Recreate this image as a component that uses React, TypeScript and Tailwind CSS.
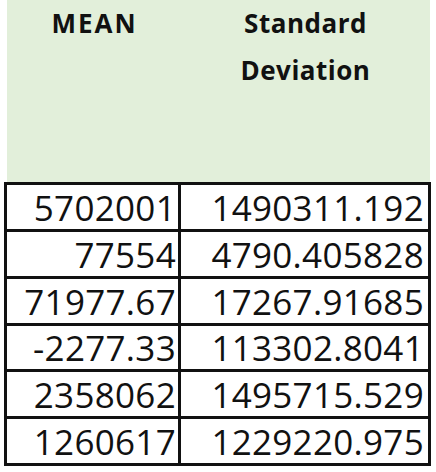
import React from "react";

const rows: [string, string][] = [
  ["5702001", "1490311.192"],
  ["77554", "4790.405828"],
  ["71977.67", "17267.91685"],
  ["-2277.33", "113302.8041"],
  ["2358062", "1495715.529"],
  ["1260617", "1229220.975"],
];

const rowH = ["h-[44px]", "h-[47px]", "h-[47px]", "h-[46px]", "h-[47px]", "h-[47px]"];

export default function App() {
  return (
    <div className="w-[436px] h-[472px] bg-white text-[#111] overflow-hidden" style={{ fontFamily: '"Open Sans", "Liberation Sans", sans-serif' }}>
      <div className="ml-[7px] w-[423px] h-[182px] bg-[#e2efda] flex font-bold text-[26px] leading-[47px]">
        <div className="w-[173px] text-center tracking-[2px] pl-[2px]">MEAN</div>
        <div className="w-[250px] text-center tracking-[0.5px] pl-[1px]">
          Standard
          <br />
          Deviation
        </div>
      </div>
      <div className="ml-[4px] w-[427px] border-[3px] border-[#111]">
        {rows.map((r, i) => (
          <div key={i} className={`flex ${rowH[i]} ${i > 0 ? "border-t-[3px] border-[#111]" : ""} text-[35px] leading-none tracking-[0.3px]`}>
            <div className="w-[171px] flex items-center justify-end pr-[2px]">{r[0]}</div>
            <div className="w-[250px] border-l-[3px] border-[#111] flex items-center justify-end pr-[4px]">{r[1]}</div>
          </div>
        ))}
      </div>
    </div>
  );
}
